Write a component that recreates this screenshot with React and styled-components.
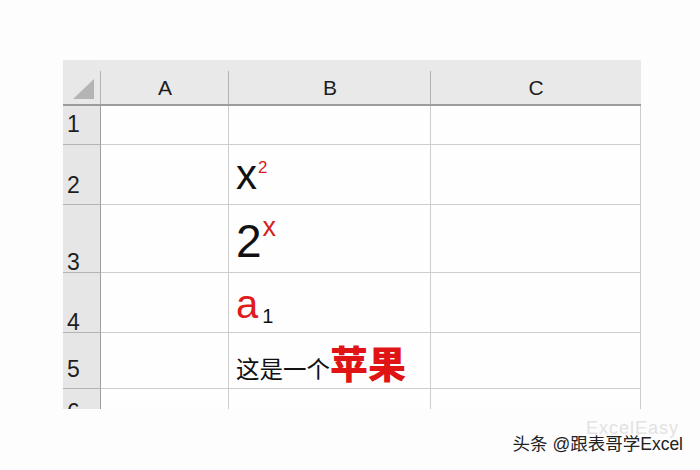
import React from 'react';
import styled, { createGlobalStyle } from 'styled-components';

const GlobalStyle = createGlobalStyle`
  html, body {
    margin: 0;
    padding: 0;
    background: #fdfdfd;
  }
  body {
    font-family: "Liberation Sans", "Noto Sans CJK SC", sans-serif;
    color: #111;
  }
`;

const Page = styled.div`
  width: 700px;
  height: 470px;
  box-sizing: border-box;
  padding: 60px 0 0 63px;
  display: flex;
  flex-direction: column;
  overflow: hidden;
`;

const Sheet = styled.div`
  display: grid;
  grid-template-columns: 38px 128px 202px 210px;
  grid-template-rows: 46px 39px 60px 68px 60px 56px 40px;
  width: 578px;
  height: 349px;
  overflow: hidden;
`;

const Corner = styled.div`
  background: #e8e8e8;
  border-bottom: 2px solid #9c9c9c;
  display: flex;
  align-items: flex-end;
  justify-content: flex-end;
  padding: 0 7px 5px 0;
  position: relative;
  &::after {
    content: '';
    position: absolute;
    right: 0;
    top: 11px;
    bottom: 0;
    width: 1px;
    background: #b2b2b2;
  }
`;

const ColHead = styled.div`
  background: #e9e9e9;
  border-bottom: 2px solid #9c9c9c;
  display: flex;
  align-items: flex-end;
  justify-content: center;
  padding-bottom: 8px;
  font-size: 21px;
  line-height: 0.75;
  color: #1e1e1e;
  position: relative;
  &::after {
    content: '';
    position: absolute;
    right: 0;
    top: 11px;
    bottom: 0;
    width: 1px;
    background: ${({ $last }) => ($last ? 'transparent' : '#b2b2b2')};
  }
`;

const RowHead = styled.div`
  background: #e6e6e6;
  border-right: 1px solid #9e9e9e;
  border-bottom: 1px solid #b4b4b4;
  display: flex;
  align-items: ${({ $top }) => ($top ? 'flex-start' : 'flex-end')};
  padding: ${({ $top }) => $top || 0}px 0 ${({ $pb = 0 }) => $pb}px 4px;
  font-size: 23px;
  line-height: 0.75;
  color: #1e1e1e;
`;

const Cell = styled.div`
  background: #fefefe;
  border-right: 1px solid #cdcdcd;
  border-bottom: 1px solid #cdcdcd;
  display: flex;
  align-items: flex-end;
  padding: 0 0 ${({ $pb = 0 }) => $pb}px 7px;
  line-height: 1;
  white-space: nowrap;
`;

const Base = styled.span`
  font-size: ${({ $size }) => $size}px;
  color: ${({ $red }) => ($red ? '#e01b1b' : '#111')};
  line-height: 1;
`;

const Script = styled.span`
  font-size: ${({ $size }) => $size}px;
  color: ${({ $red }) => ($red ? '#d61f1f' : '#111')};
  vertical-align: ${({ $shift }) => $shift}px;
  margin-left: ${({ $gap = 2 }) => $gap}px;
  line-height: 1;
`;

const CjkText = styled.span`
  font-family: "Noto Sans CJK SC", sans-serif;
  font-size: 23.5px;
  color: #111;
  line-height: 1;
`;

const Apple = styled.span`
  font-family: "Noto Sans CJK SC", sans-serif;
  font-size: 38px;
  font-weight: 900;
  color: #e01414;
  line-height: 1;
`;

const Footer = styled.div`
  display: flex;
  justify-content: flex-end;
  padding: 21px 17px 0 0;
`;

const Watermark = styled.span`
  font-family: "Liberation Sans", "Noto Sans CJK SC", sans-serif;
  font-size: 17.5px;
  color: #222;
  text-shadow: 0 0 1px #fff;
  position: relative;
`;

const Ghost = styled.span`
  position: absolute;
  right: 4px;
  top: -12px;
  font-size: 18px;
  color: #e2e2e2;
  letter-spacing: 1px;
`;

const Mark = styled.span`
  position: relative;
`;

const rows = [
  { n: 1, pb: 11 },
  { n: 2, pb: 10 },
  { n: 3, pb: 1 },
  { n: 4, pb: 1 },
  { n: 5, pb: 10 },
  { n: 6, top: 15 },
];

const renderB = (n) => {
  if (n === 2)
    return (
      <Cell $pb={8}>
        <span>
          <Base $size={42}>x</Base>
          <Script $size={17} $red $shift={16} $gap={1}>2</Script>
        </span>
      </Cell>
    );
  if (n === 3)
    return (
      <Cell $pb={8}>
        <span>
          <Base $size={46}>2</Base>
          <Script $size={27} $red $shift={21} $gap={1}>x</Script>
        </span>
      </Cell>
    );
  if (n === 4)
    return (
      <Cell $pb={6}>
        <span>
          <Base $size={40} $red>a</Base>
          <Script $size={20} $shift={-5} $gap={4}>1</Script>
        </span>
      </Cell>
    );
  if (n === 5)
    return (
      <Cell $pb={7}>
        <span>
          <CjkText>这是一个</CjkText>
          <Apple>苹果</Apple>
        </span>
      </Cell>
    );
  return <Cell />;
};

const App = () => (
  <>
    <GlobalStyle />
    <Page>
      <Sheet>
        <Corner>
          <svg width="21" height="20" viewBox="0 0 21 20">
            <polygon points="21,0 21,20 0,20" fill="#b4b4b4" />
          </svg>
        </Corner>
        <ColHead>A</ColHead>
        <ColHead>B</ColHead>
        <ColHead $last>C</ColHead>
        {rows.map((r) => (
          <React.Fragment key={r.n}>
            <RowHead $pb={r.pb} $top={r.top}>{r.n}</RowHead>
            <Cell />
            {renderB(r.n)}
            <Cell />
          </React.Fragment>
        ))}
      </Sheet>
      <Footer>
        <Watermark>
          <Ghost>ExcelEasy</Ghost>
          <Mark>头条 @跟表哥学Excel</Mark>
        </Watermark>
      </Footer>
    </Page>
  </>
);

export default App;
